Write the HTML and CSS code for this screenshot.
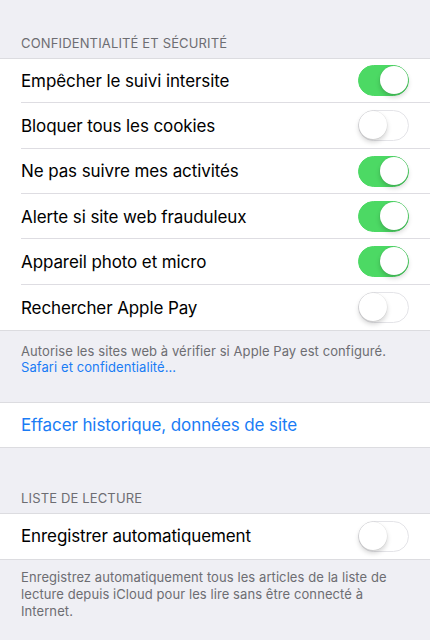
FILE: index.html
```html
<!DOCTYPE html>
<html lang="fr">
<head>
  <meta charset="UTF-8">
  <meta name="viewport" content="width=device-width, initial-scale=1.0">
  <title>Safari – Confidentialité</title>
  <link rel="stylesheet" href="styles.css">
</head>
<body>
  <div class="section-title first">CONFIDENTIALITÉ ET SÉCURITÉ</div>
  <div class="group">
    <div class="row"><div class="cell"><span>Empêcher le suivi intersite</span><span class="switch on"></span></div></div>
    <div class="row"><div class="cell"><span>Bloquer tous les cookies</span><span class="switch"></span></div></div>
    <div class="row"><div class="cell"><span>Ne pas suivre mes activités</span><span class="switch on"></span></div></div>
    <div class="row"><div class="cell"><span>Alerte si site web frauduleux</span><span class="switch on"></span></div></div>
    <div class="row"><div class="cell"><span>Appareil photo et micro</span><span class="switch on"></span></div></div>
    <div class="row"><div class="cell"><span>Rechercher Apple Pay</span><span class="switch"></span></div></div>
  </div>
  <div class="footnote first-note">
    Autorise les sites web à vérifier si Apple Pay est configuré.<br>
    <a href="#">Safari et confidentialité…</a>
  </div>

  <div class="group">
    <div class="row"><div class="cell"><a href="#" class="action">Effacer historique, données de site</a></div></div>
  </div>

  <div class="section-title">LISTE DE LECTURE</div>
  <div class="group">
    <div class="row"><div class="cell"><span>Enregistrer automatiquement</span><span class="switch"></span></div></div>
  </div>
  <div class="footnote">
    Enregistrez automatiquement tous les articles de la liste de lecture depuis iCloud pour les lire sans être connecté à Internet.
  </div>
</body>
</html>
```

FILE: styles.css
```css
body {
  margin: 0;
  background: #efeff4;
  font-family: Inter, "Noto Sans", sans-serif;
  color: #000;
  -webkit-font-smoothing: antialiased;
}
a {
  color: #1a7cf5;
  text-decoration: none;
}
.section-title {
  padding: 42px 21px 7px;
  font-size: 13px;
  line-height: 16px;
  letter-spacing: 0.15px;
  color: #6d6d72;
}
.section-title.first {
  padding-top: 35px;
}
.group {
  background: #fff;
  border-top: 1px solid #dcdce0;
  border-bottom: 1px solid #dcdce0;
}
.row {
  padding-left: 21px;
}
.cell {
  height: 45.33px;
  box-sizing: border-box;
  display: flex;
  align-items: center;
  justify-content: space-between;
  padding-right: 21px;
  padding-top: 1px;
  border-bottom: 1px solid #dedde2;
  font-size: 17px;
  letter-spacing: -0.1px;
}
.row:last-child .cell {
  border-bottom: none;
}
.group .row:first-child .cell {
  margin-top: -1px;
}
.switch {
  position: relative;
  width: 51px;
  height: 31px;
  box-sizing: border-box;
  border-radius: 16px;
  background: #fff;
  border: 1.5px solid #e4e4e8;
  flex-shrink: 0;
}
.switch::after {
  content: "";
  position: absolute;
  top: 0;
  left: 0;
  width: 28px;
  height: 28px;
  border-radius: 50%;
  background: #fff;
  box-shadow: 0 3px 5px rgba(0, 0, 0, 0.18), 0 0 0 0.5px rgba(0, 0, 0, 0.08);
}
.switch.on {
  background: #4cd964;
  border-color: #4cd964;
}
.switch.on::after {
  left: auto;
  right: 0;
}
.footnote {
  padding: 9px 21px 0;
  font-size: 13px;
  line-height: 17px;
  letter-spacing: 0.08px;
  color: #6d6d72;
}
.first-note {
  padding: 12px 21px 27px;
  line-height: 16px;
}
.action {
  font-size: 17px;
}
```
